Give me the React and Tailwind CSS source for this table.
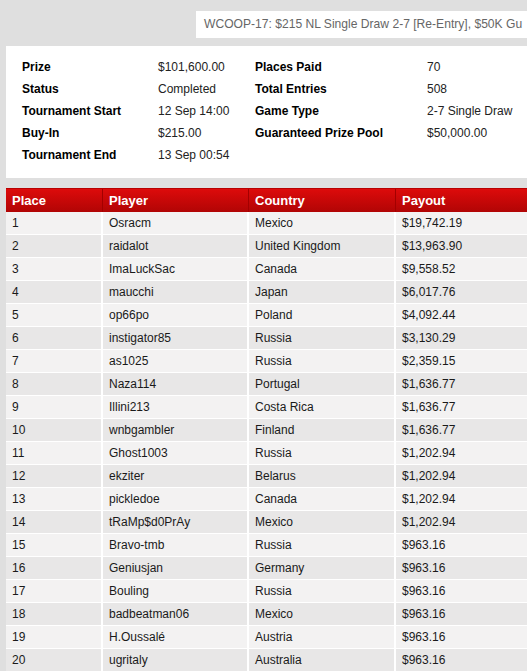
const info = [
  ['Prize', '$101,600.00', 'Places Paid', '70'],
  ['Status', 'Completed', 'Total Entries', '508'],
  ['Tournament Start', '12 Sep 14:00', 'Game Type', '2-7 Single Draw'],
  ['Buy-In', '$215.00', 'Guaranteed Prize Pool', '$50,000.00'],
  ['Tournament End', '13 Sep 00:54', '', ''],
];

const rows = [
  ['1', 'Osracm', 'Mexico', '$19,742.19'],
  ['2', 'raidalot', 'United Kingdom', '$13,963.90'],
  ['3', 'ImaLuckSac', 'Canada', '$9,558.52'],
  ['4', 'maucchi', 'Japan', '$6,017.76'],
  ['5', 'op66po', 'Poland', '$4,092.44'],
  ['6', 'instigator85', 'Russia', '$3,130.29'],
  ['7', 'as1025', 'Russia', '$2,359.15'],
  ['8', 'Naza114', 'Portugal', '$1,636.77'],
  ['9', 'Illini213', 'Costa Rica', '$1,636.77'],
  ['10', 'wnbgambler', 'Finland', '$1,636.77'],
  ['11', 'Ghost1003', 'Russia', '$1,202.94'],
  ['12', 'ekziter', 'Belarus', '$1,202.94'],
  ['13', 'pickledoe', 'Canada', '$1,202.94'],
  ['14', 'tRaMp$d0PrAy', 'Mexico', '$1,202.94'],
  ['15', 'Bravo-tmb', 'Russia', '$963.16'],
  ['16', 'Geniusjan', 'Germany', '$963.16'],
  ['17', 'Bouling', 'Russia', '$963.16'],
  ['18', 'badbeatman06', 'Mexico', '$963.16'],
  ['19', 'H.Oussalé', 'Austria', '$963.16'],
  ['20', 'ugritaly', 'Australia', '$963.16'],
];

export default function App() {
  return (
    <div className="min-h-screen overflow-hidden bg-[#dfdfdf] font-['Liberation_Sans',Arial,sans-serif] text-[12px]">
      <div className="pt-[11px] pl-[196px]">
        <div className="h-[27px] overflow-hidden bg-white pl-[8px] text-[12.1px] leading-[27px] text-[#666] whitespace-nowrap">
          WCOOP-17: $215 NL Single Draw 2-7 [Re-Entry], $50K Gu
        </div>
      </div>

      <div className="ml-[6px] mt-[8px] h-[132px] bg-white pl-[16px] pt-[10px]">
        {info.map((r, i) => (
          <div key={i} className="flex h-[22px] items-center">
            <div className="w-[136px] font-bold text-black">{r[0]}</div>
            <div className="w-[97px] text-[#222]">{r[1]}</div>
            <div className="w-[172px] font-bold text-black">{r[2]}</div>
            <div className="text-[#222]">{r[3]}</div>
          </div>
        ))}
      </div>

      <div className="ml-[6px] mt-[10px]">
        <div className="flex h-[24px] items-center border-t border-[#b80000] bg-gradient-to-b from-[#dd0b0b] to-[#b10505] text-[13px] font-bold text-white">
          <div className="flex h-full w-[97px] items-center border-r border-[#a30000] pl-[6px]">Place</div>
          <div className="flex h-full w-[146px] items-center border-r border-[#a30000] pl-[6px]">Player</div>
          <div className="flex h-full w-[147px] items-center border-r border-[#a30000] pl-[6px]">Country</div>
          <div className="flex h-full flex-1 items-center pl-[6px]">Payout</div>
        </div>
        {rows.map((r, i) => (
          <div
            key={i}
            className={
              'flex h-[23px] border-b border-white text-[#1a1a1a] ' +
              (i % 2 === 0 ? 'bg-[#f3f2f2]' : 'bg-[#e8e7e7]')
            }
          >
            <div className="flex w-[97px] items-center border-r-2 border-white pl-[6px]">{r[0]}</div>
            <div className="flex w-[146px] items-center border-r-2 border-white pl-[6px]">{r[1]}</div>
            <div className="flex w-[147px] items-center border-r-2 border-white pl-[6px]">{r[2]}</div>
            <div className="flex flex-1 items-center pl-[6px]">{r[3]}</div>
          </div>
        ))}
      </div>
    </div>
  );
}
